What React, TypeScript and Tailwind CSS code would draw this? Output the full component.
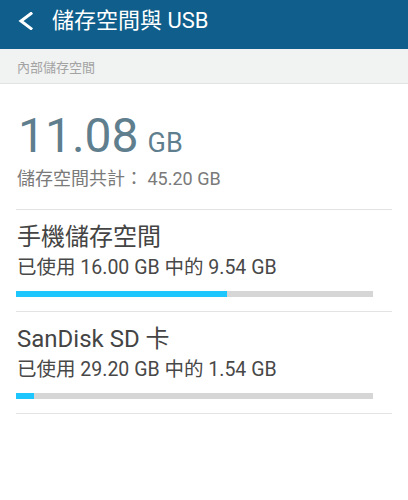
import React from 'react'

const volumes = [
    { name: '手機儲存空間', total: '16.00', used: '9.54', pct: 59 },
    { name: 'SanDisk SD 卡', total: '29.20', used: '1.54', pct: 5 },
]

const App: React.FC = () => {
    return (
        <div className="min-h-[500px] w-[408px] bg-white font-['Roboto','Noto_Sans_CJK_TC',sans-serif]">
            {/* Action bar */}
            <div className="flex h-[49px] items-center bg-[#0f5e8b] pb-[7px] pl-[18px]">
                <svg width="15" height="18" viewBox="0 0 15 18" className="shrink-0">
                    <polyline
                        points="13,1.5 3,9 13,16.5"
                        fill="none"
                        stroke="white"
                        strokeWidth="3"
                        strokeLinecap="square"
                        strokeLinejoin="miter"
                    />
                </svg>
                <span className="ml-[19px] text-[22px] leading-[28px] text-white">
                    儲存空間與 USB
                </span>
            </div>

            {/* Section header */}
            <div className="flex h-[35px] items-center border-b border-[#e2e3e3] bg-[#f1f2f2] px-[17px] pt-[3px] text-[13px] text-[#a3a3a3]">
                內部儲存空間
            </div>

            <div className="px-4">
                {/* Total */}
                <div className="border-b border-[#e3e3e3] pb-[18px] pt-[28px]">
                    <div className="pl-[2px] text-[48px] leading-[48px] text-[#5f7e8e]">
                        11.08
                        <span className="ml-[9px] text-[27px] leading-none">GB</span>
                    </div>
                    <div className="mt-[7px] pl-[1px] text-[18px] leading-[24px] text-[#7a7a7a]">
                        儲存空間共計： 45.20 GB
                    </div>
                </div>

                {/* Volumes */}
                {volumes.map((v) => (
                    <div key={v.name} className="border-b border-[#e3e3e3] pb-[14px] pt-[12px]">
                        <div className="pl-[1px] text-[24px] leading-[30px] text-[#444]">{v.name}</div>
                        <div className="mt-[4px] pl-[1px] text-[19.5px] leading-[24px] text-[#484848]">
                            已使用 {v.total} GB 中的 {v.used} GB
                        </div>
                        <div className="mr-[19px] mt-[11px] h-[6px] bg-[#d6d6d6]">
                            <div className="h-full bg-[#1dc7fd]" style={{ width: `${v.pct}%` }}></div>
                        </div>
                    </div>
                ))}
            </div>
        </div>
    )
}

export default App
